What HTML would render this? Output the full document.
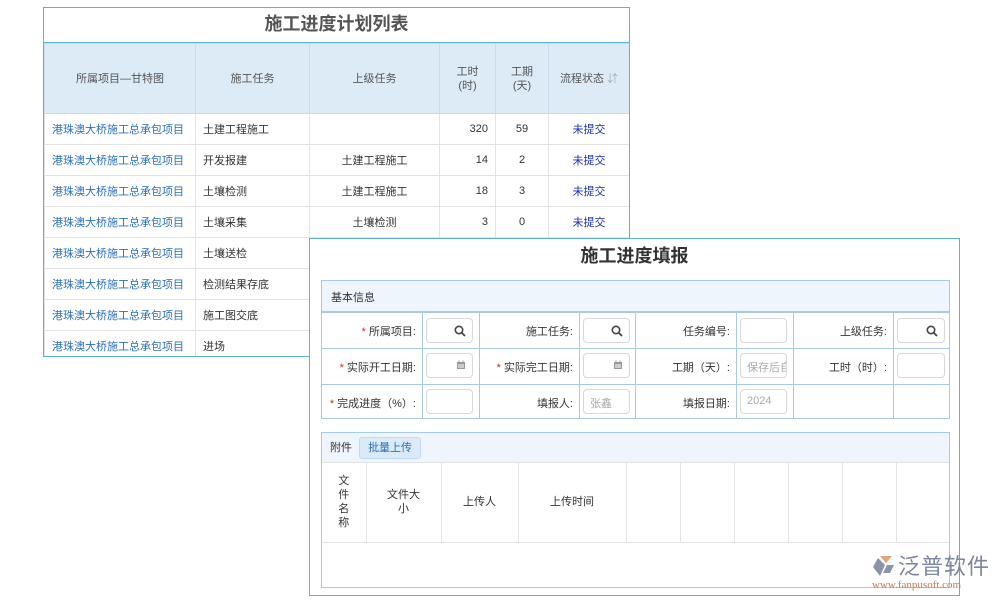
<!DOCTYPE html>
<html><head><meta charset="utf-8"><style>
*{margin:0;padding:0;box-sizing:border-box}
body{width:1000px;height:600px;background:#fff;position:relative;overflow:hidden;font-family:"Liberation Sans","Noto Sans CJK SC",sans-serif;font-size:11px;color:#333}
.a{position:absolute}
.p1{left:43px;top:7px;width:587px;height:350px;border:1px solid #5fb3c9;background:#fff;overflow:hidden}
table{border-collapse:collapse;table-layout:fixed}
.t1 td{border:1px solid #e3e3e3;height:31px;padding:0 7px}
.t1 th{background:#ddebf7;font-weight:normal;color:#555;border:1px solid #c9dced;height:70px;line-height:14px}
.lk{color:#2a6fb8}
.st{color:#1a2fb0;text-align:center}
.r{text-align:right}
.c{text-align:center}
.p2{left:309px;top:238px;width:651px;height:358px;border:1px solid #5fb3c9;background:#fff}
.inp{position:absolute;border:1px solid #d8d8d8;border-radius:4px;background:#fff;height:25px;color:#aaa;font-size:11px;padding:5px 6px}
.inp svg{position:absolute;right:6px;top:6px}
.t2 td{border:1px solid #a9c8e3;height:36px;font-size:11px;color:#333;text-align:right;padding-right:6px}
.rq{color:#d22}
</style></head><body>
<div class="a p1">
<div style="height:35px;text-align:center;line-height:32px;font-size:18px;font-weight:bold;color:#555;border-bottom:1px solid #5fb3c9">施工进度计划列表</div>
<table class="t1" style="width:585px">
<colgroup><col style="width:151px"><col style="width:114px"><col style="width:130px"><col style="width:56px"><col style="width:53px"><col style="width:81px"></colgroup>
<tr><th>所属项目—甘特图</th><th>施工任务</th><th>上级任务</th><th>工时<br>(时)</th><th>工期<br>(天)</th><th>流程状态 <span style="color:#aaa">⇵</span></th></tr>
<tr><td class="lk">港珠澳大桥施工总承包项目</td><td>土建工程施工</td><td></td><td class="r">320</td><td class="c">59</td><td class="st">未提交</td></tr>
<tr><td class="lk">港珠澳大桥施工总承包项目</td><td>开发报建</td><td class="c">土建工程施工</td><td class="r">14</td><td class="c">2</td><td class="st">未提交</td></tr>
<tr><td class="lk">港珠澳大桥施工总承包项目</td><td>土壤检测</td><td class="c">土建工程施工</td><td class="r">18</td><td class="c">3</td><td class="st">未提交</td></tr>
<tr><td class="lk">港珠澳大桥施工总承包项目</td><td>土壤采集</td><td class="c">土壤检测</td><td class="r">3</td><td class="c">0</td><td class="st">未提交</td></tr>
<tr><td class="lk">港珠澳大桥施工总承包项目</td><td>土壤送检</td><td></td><td></td><td></td><td></td></tr>
<tr><td class="lk">港珠澳大桥施工总承包项目</td><td>检测结果存底</td><td></td><td></td><td></td><td></td></tr>
<tr><td class="lk">港珠澳大桥施工总承包项目</td><td>施工图交底</td><td></td><td></td><td></td><td></td></tr>
<tr><td class="lk">港珠澳大桥施工总承包项目</td><td>进场</td><td></td><td></td><td></td><td></td></tr>
</table>
</div>

<div class="a p2"></div>
<div class="a" style="left:309px;top:242px;width:651px;text-align:center;font-size:18px;font-weight:bold;color:#333">施工进度填报</div>

<div class="a" style="left:321px;top:280px;width:629px;height:139px;border:1px solid #a9c8e3;overflow:hidden">
<div style="height:31px;background:#eef5fc;border-bottom:1px solid #a9c8e3;padding:8px 9px;font-size:11px">基本信息</div>
<table class="t2" style="width:629px;margin-left:-1px">
<colgroup><col style="width:101px"><col style="width:57px"><col style="width:100px"><col style="width:56px"><col style="width:101px"><col style="width:57px"><col style="width:100px"><col style="width:57px"></colgroup>
<tr><td><span class="rq">*</span> 所属项目:</td><td></td><td>施工任务:</td><td></td><td>任务编号:</td><td></td><td>上级任务:</td><td></td></tr>
<tr><td><span class="rq">*</span> 实际开工日期:</td><td></td><td><span class="rq">*</span> 实际完工日期:</td><td></td><td>工期（天）:</td><td></td><td>工时（时）:</td><td></td></tr>
<tr><td><span class="rq">*</span> 完成进度（%）:</td><td></td><td>填报人:</td><td></td><td>填报日期:</td><td></td><td></td><td></td></tr>
</table>
</div>
<div class="inp" style="left:426px;top:318px;width:47px"><svg width="12" height="12" viewBox="0 0 12 12"><circle cx="5" cy="5" r="3.7" fill="none" stroke="#444" stroke-width="1.6"/><path d="M7.7 7.7L11 11" stroke="#444" stroke-width="1.8"/></svg></div>
<div class="inp" style="left:583px;top:318px;width:47px"><svg width="12" height="12" viewBox="0 0 12 12"><circle cx="5" cy="5" r="3.7" fill="none" stroke="#444" stroke-width="1.6"/><path d="M7.7 7.7L11 11" stroke="#444" stroke-width="1.8"/></svg></div>
<div class="inp" style="left:740px;top:318px;width:47px"></div>
<div class="inp" style="left:897px;top:318px;width:48px"><svg width="12" height="12" viewBox="0 0 12 12"><circle cx="5" cy="5" r="3.7" fill="none" stroke="#444" stroke-width="1.6"/><path d="M7.7 7.7L11 11" stroke="#444" stroke-width="1.8"/></svg></div>
<div class="inp" style="left:426px;top:353px;width:47px"><svg width="10" height="10" viewBox="0 0 10 10"><rect x="1" y="2" width="8" height="7" fill="#999"/><rect x="2" y="4" width="6" height="4" fill="#ccc"/><rect x="2.5" y="0.5" width="1" height="2" fill="#999"/><rect x="6.5" y="0.5" width="1" height="2" fill="#999"/></svg></div>
<div class="inp" style="left:583px;top:353px;width:47px"><svg width="10" height="10" viewBox="0 0 10 10"><rect x="1" y="2" width="8" height="7" fill="#999"/><rect x="2" y="4" width="6" height="4" fill="#ccc"/><rect x="2.5" y="0.5" width="1" height="2" fill="#999"/><rect x="6.5" y="0.5" width="1" height="2" fill="#999"/></svg></div>
<div class="inp" style="left:740px;top:353px;width:47px;overflow:hidden;white-space:nowrap">保存后自</div>
<div class="inp" style="left:897px;top:353px;width:48px"></div>
<div class="inp" style="left:426px;top:389px;width:47px"></div>
<div class="inp" style="left:583px;top:389px;width:47px">张鑫</div>
<div class="inp" style="left:740px;top:389px;width:47px">2024</div>

<div class="a" style="left:321px;top:432px;width:629px;height:156px;border:1px solid #a9c8e3">
<div style="height:30px;background:#eef5fc;border-bottom:1px solid #e3e3e3;padding:4px 8px;font-size:11px;line-height:20px">附件 <span style="display:inline-block;margin-left:4px;padding:0 8px;background:#dbeaf8;border:1px solid #c3dbf0;border-radius:3px;color:#2a6fb8">批量上传</span></div>
<table style="width:627px;border-collapse:collapse">
<colgroup><col style="width:44px"><col style="width:75px"><col style="width:77px"><col style="width:108px"><col style="width:54px"><col style="width:54px"><col style="width:54px"><col style="width:54px"><col style="width:54px"><col></colgroup>
<tr style="height:79px;text-align:center;font-size:11px;line-height:14px">
<td style="border-right:1px solid #e3e3e3;border-bottom:1px solid #e3e3e3">文<br>件<br>名<br>称</td>
<td style="border-right:1px solid #e3e3e3;border-bottom:1px solid #e3e3e3">文件大<br>小</td>
<td style="border-right:1px solid #e3e3e3;border-bottom:1px solid #e3e3e3">上传人</td>
<td style="border-right:1px solid #e3e3e3;border-bottom:1px solid #e3e3e3">上传时间</td>
<td style="border-right:1px solid #e3e3e3;border-bottom:1px solid #e3e3e3"></td><td style="border-right:1px solid #e3e3e3;border-bottom:1px solid #e3e3e3"></td><td style="border-right:1px solid #e3e3e3;border-bottom:1px solid #e3e3e3"></td><td style="border-right:1px solid #e3e3e3;border-bottom:1px solid #e3e3e3"></td><td style="border-right:1px solid #e3e3e3;border-bottom:1px solid #e3e3e3"></td><td style="border-bottom:1px solid #e3e3e3"></td></tr>
</table>
</div>

<svg class="a" style="left:872px;top:555px" width="26" height="22" viewBox="0 0 26 22"><path d="M8 1 L20 1 L14 8 Z" fill="#e8a27a"/><path d="M6 3 L13 10 L8 21 L1 12 Z" fill="#8a93a8"/><path d="M15 10 L22 10 L18 18 L11 18 Z" fill="#8a93a8"/></svg>
<div class="a" style="left:898px;top:551px;font-size:22px;color:#7d86a0;letter-spacing:1px;font-family:'Noto Sans CJK SC',sans-serif;line-height:28px">泛普软件</div>
<div class="a" style="left:872px;top:579px;font-size:11px;color:#c07a55;font-family:'Liberation Serif',serif">www.fanpusoft.com</div>
</body></html>
